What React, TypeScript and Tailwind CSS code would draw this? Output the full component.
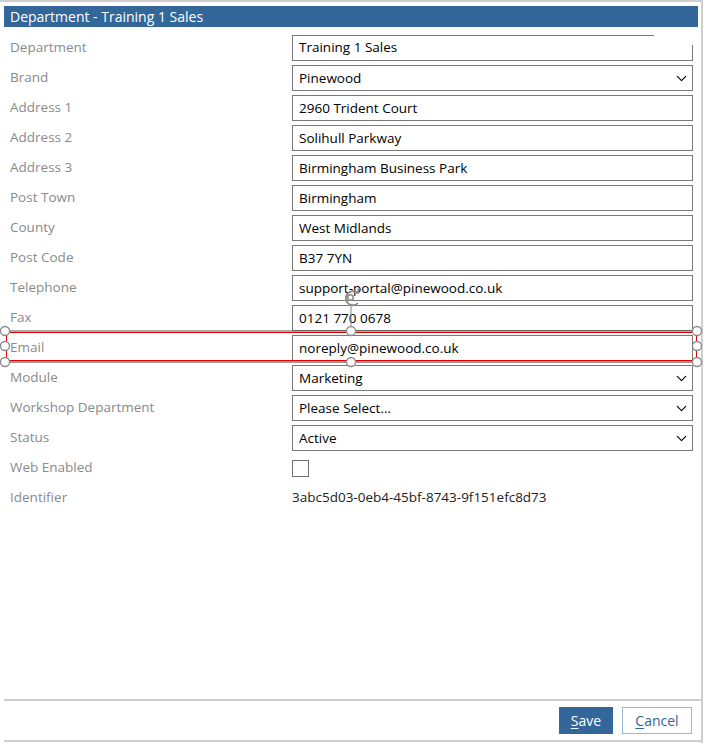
import { ChevronDown } from 'lucide-react';

const font = { fontFamily: '"Open Sans", "Noto Sans", sans-serif' };

type Row =
  | { label: string; kind: 'text'; value: string }
  | { label: string; kind: 'select'; value: string }
  | { label: string; kind: 'check' }
  | { label: string; kind: 'plain'; value: string };

const rows: Row[] = [
  { label: 'Brand', kind: 'select', value: 'Pinewood' },
  { label: 'Address 1', kind: 'text', value: '2960 Trident Court' },
  { label: 'Address 2', kind: 'text', value: 'Solihull Parkway' },
  { label: 'Address 3', kind: 'text', value: 'Birmingham Business Park' },
  { label: 'Post Town', kind: 'text', value: 'Birmingham' },
  { label: 'County', kind: 'text', value: 'West Midlands' },
  { label: 'Post Code', kind: 'text', value: 'B37 7YN' },
  { label: 'Telephone', kind: 'text', value: 'support-portal@pinewood.co.uk' },
  { label: 'Fax', kind: 'text', value: '0121 770 0678' },
  { label: 'Email', kind: 'text', value: 'noreply@pinewood.co.uk' },
  { label: 'Module', kind: 'select', value: 'Marketing' },
  { label: 'Workshop Department', kind: 'select', value: 'Please Select...' },
  { label: 'Status', kind: 'select', value: 'Active' },
  { label: 'Web Enabled', kind: 'check' },
  { label: 'Identifier', kind: 'plain', value: '3abc5d03-0eb4-45bf-8743-9f151efc8d73' },
];

function Field({ row }: { row: Row }) {
  if (row.kind === 'check') {
    return <div className="w-[17px] h-[17px] border border-[#6f6f6f] bg-white" />;
  }
  if (row.kind === 'plain') {
    return <div className="text-[13.5px] text-[#222] -mt-[2px]">{row.value}</div>;
  }
  return (
    <div className="w-[401px] h-[26px] border border-[#7a7a7a] bg-white flex items-center pl-[6px] pr-[2px] text-[13.5px] text-black">
      <span className="flex-1">{row.value}</span>
      {row.kind === 'select' && <ChevronDown className="w-[17px] h-[17px]" strokeWidth={1.6} />}
    </div>
  );
}

function SelectionOverlay() {
  const handles = [
    [5, 331], [351, 331], [697, 331],
    [5, 346], [697, 346],
    [5, 362], [351, 362], [697, 362],
  ];
  return (
    <svg className="absolute left-0 top-0 pointer-events-none" width="706" height="744">
      <line x1="5" y1="331" x2="697" y2="331" stroke="#555" strokeWidth="1" />
      <line x1="5" y1="362" x2="697" y2="362" stroke="#333" strokeWidth="1" />
      <rect x="6.5" y="332.5" width="690" height="28" fill="none" stroke="#e00000" strokeWidth="1" />
      <line x1="351" y1="305" x2="351" y2="331" stroke="#888" strokeWidth="1" />
      <g fill="none" stroke="#8a8a8a" strokeWidth="1.8">
        <path d="M357.5 293 A7 7 0 1 0 358 303" />
        <path d="M353.5 291.5 L358 293 L358.5 288.5" />
        <circle cx="350.5" cy="297.5" r="2.8" strokeWidth="1.5" />
      </g>
      {handles.map(([x, y], i) => (
        <circle key={i} cx={x} cy={y} r="4.5" fill="white" stroke="#8a8a8a" strokeWidth="1.3" />
      ))}
    </svg>
  );
}

export default function App() {
  return (
    <div className="relative w-[706px] h-[744px] bg-white" style={font}>
      <div className="w-[703px] h-[743px] border-t-2 border-r-2 border-[#cfcfcf] pl-[4px] flex flex-col">
        {/* Title bar */}
        <div className="mt-[4px] w-[694px] h-[21px] bg-[#336699] flex items-center pl-[6px] text-white text-[14px]">
          Department - Training 1 Sales
        </div>

        {/* Form */}
        <div className="mt-[8px] flex flex-col gap-[4px]">
          <div className="flex items-center h-[26px]">
            <div className="w-[288px] pl-[6px] text-[13.5px] text-[#8a8a8a] -mt-[2px]">Department</div>
            <div className="relative w-[401px] h-[26px] border-l border-b border-[#7a7a7a] flex items-center pl-[6px] text-[13.5px] text-black">
              <div className="absolute left-0 top-0 w-[361px] border-t border-[#7a7a7a]" />
              <div className="absolute right-0 top-[10px] bottom-0 border-r border-[#7a7a7a]" />
              Training 1 Sales
            </div>
          </div>
          {rows.map((row) => (
            <div key={row.label} className="flex items-center h-[26px]">
              <div className="w-[288px] pl-[6px] text-[13.5px] text-[#8a8a8a] -mt-[2px]">{row.label}</div>
              <Field row={row} />
            </div>
          ))}
        </div>

        <div className="flex-1" />

        {/* Footer */}
        <div className="w-[698px] border-t-2 border-b-2 border-[#cfcfcf] h-[43px] flex items-center justify-end gap-[9px] pr-[10px] mb-[1px]">
          <button className="w-[54px] h-[27px] bg-[#336699] text-white text-[14px]">
            <span className="underline underline-offset-2">S</span>ave
          </button>
          <button className="w-[70px] h-[27px] bg-white border border-[#9bb8d6] text-[#336699] text-[14px]">
            <span className="underline underline-offset-2">C</span>ancel
          </button>
        </div>
      </div>
      <SelectionOverlay />
    </div>
  );
}
